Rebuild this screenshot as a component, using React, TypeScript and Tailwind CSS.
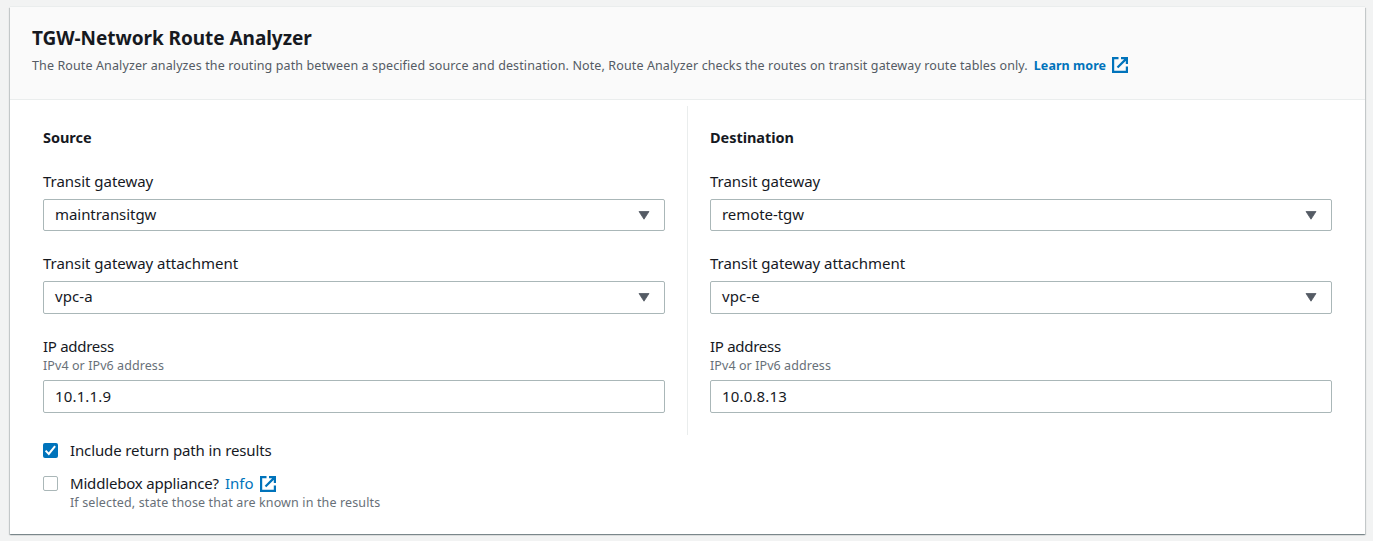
import React from "react";

function ExternalIcon() {
  return (
    <svg width="16" height="16" viewBox="0 0 16 16" fill="none" stroke="#0073bb" strokeWidth="2.2" className="block shrink-0">
      <path d="M6.5 1.1H1.1v13.8h13.8V9.5" />
      <path d="M9 1.1h5.9V7M14.9 1.1L5.5 10.5" />
    </svg>
  );
}

function Caret() {
  return (
    <svg width="12" height="9" viewBox="0 0 12 9" className="block">
      <path d="M1 .5h10L6 8.2z" fill="#545b64" stroke="#545b64" strokeWidth=".8" strokeLinejoin="round" />
    </svg>
  );
}

type SelectProps = { label: string; value: string; valueClass: string; boxClass: string };

function SelectField({ label, value, valueClass, boxClass }: SelectProps) {
  return (
    <div>
      <div className="h-[22px] leading-[20px] tracking-[-0.03px]">{label}</div>
      <button className={`mt-[6px] flex w-full justify-between rounded-[2px] border border-[#aab7b8] bg-white pt-1 pr-[14px] pl-[11px] leading-[20px] ${boxClass}`}>
        <span className={valueClass}>{value}</span>
        <span className="pt-[7px]">
          <Caret />
        </span>
      </button>
    </div>
  );
}

type EndpointProps = {
  title: string;
  gateway: string;
  attachment: string;
  ip: string;
};

function Endpoint(p: EndpointProps) {
  return (
    <div className="w-[622px]">
      <h2 className="h-[22px] text-[14.5px] font-bold leading-[20px] tracking-[-0.04px]">{p.title}</h2>
      <div className="mt-[22px]">
        <SelectField label="Transit gateway" value={p.gateway} valueClass="tracking-[-0.06px]" boxClass="h-8" />
      </div>
      <div className="mt-[22px]">
        <SelectField label="Transit gateway attachment" value={p.attachment} valueClass="tracking-[0.1px]" boxClass="h-[33px]" />
      </div>
      <div className="mt-[22px]">
        <div className="h-[22px] leading-[20px] tracking-[-0.28px]">IP address</div>
        <div className="h-4 text-[12.5px] leading-4 tracking-[0.08px] text-[#687078]">IPv4 or IPv6 address</div>
        <div className="mt-[6px] flex h-[33px] items-center rounded-[2px] border border-[#aab7b8] pl-[11px] tracking-[0.15px]">{p.ip}</div>
      </div>
    </div>
  );
}

export default function App() {
  return (
    <div className="h-[541px] w-[1373px] overflow-hidden bg-[#f2f3f3] pt-[7px] pl-[10px] font-['Noto_Sans',sans-serif] text-[15px] text-[#16191f]">
      <main className="h-[527px] w-[1355px] bg-white shadow-[0_1px_1px_0_rgba(0,28,36,0.3),1px_1px_1px_0_rgba(0,28,36,0.15),-1px_1px_1px_0_rgba(0,28,36,0.15),0_-1px_0_0_#eaeded]">
        <header className="h-[93px] border-b border-[#eaeded] bg-[#fafafa] pt-[18px] pl-[22px]">
          <h1 className="h-[26px] text-[19px] font-bold leading-[26px] tracking-[-0.05px]">TGW-Network Route Analyzer</h1>
          <div className="mt-[6px] flex h-4 items-center text-[12.5px] leading-4 whitespace-nowrap">
            <span className="mr-[6px] pt-0.5 tracking-[0.115px] text-[#545b64]">
              The Route Analyzer analyzes the routing path between a specified source and destination. Note, Route Analyzer checks the routes on transit gateway route tables only.
            </span>
            <a className="flex items-center gap-[6px] font-bold text-[#0073bb]">
              <span className="pt-0.5 tracking-[0.06px]">Learn more</span>
              <ExternalIcon />
            </a>
          </div>
        </header>
        <section className="flex pt-[6px] pl-[33px]">
          <div className="h-[329px] w-[645px] border-r border-[#eaeded] pt-[21px]">
            <Endpoint title="Source" gateway="maintransitgw" attachment="vpc-a" ip="10.1.1.9" />
          </div>
          <div className="pt-[21px] pl-[22px]">
            <Endpoint title="Destination" gateway="remote-tgw" attachment="vpc-e" ip="10.0.8.13" />
          </div>
        </section>
        <section className="pt-[5px] pl-[33px]">
          <div className="flex h-[22px] leading-[20px]">
            <span className="mt-[3px] mr-3 flex size-[15px] items-center justify-center rounded-[2px] bg-[#0073bb]">
              <svg width="15" height="15" viewBox="0 0 15 15" fill="none" stroke="#fff" strokeWidth="2">
                <path d="M2.6 7.6l3.2 3.3 6.3-7.8" />
              </svg>
            </span>
            <span className="tracking-[-0.12px]">Include return path in results</span>
          </div>
          <div className="mt-[11px] flex h-[22px] leading-[20px]">
            <span className="mt-[3px] mr-3 size-[15px] rounded-[2px] border border-[#aab7b8]" />
            <span className="mr-[6px] tracking-[-0.18px]">Middlebox appliance?</span>
            <a className="flex items-center gap-[6px] text-[#0073bb]">
              <span className="h-[22px]">Info</span>
              <ExternalIcon />
            </a>
          </div>
          <div className="h-4 pl-[27px] text-[12.5px] leading-4 tracking-[0.13px] text-[#687078]">If selected, state those that are known in the results</div>
        </section>
      </main>
    </div>
  );
}
